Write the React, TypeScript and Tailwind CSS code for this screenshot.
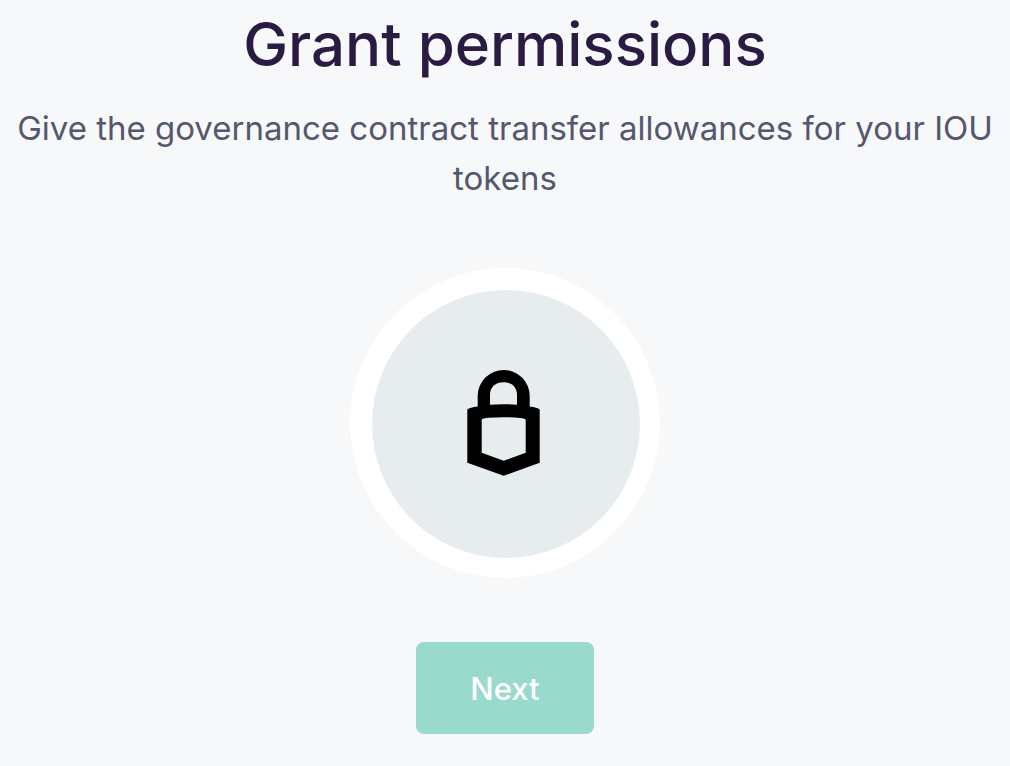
function LockMedallion() {
  return (
    <svg className="mt-[65px] size-[310px]" viewBox="0 0 310 310" role="img" aria-label="Padlock">
      <circle cx="155" cy="155" r="155" fill="#ffffff" />
      <circle cx="156" cy="156" r="134" fill="#e7edef" />
      <path
        fillRule="evenodd"
        d="M127.700 138.600V128a26 26 0 0 1 52 0v10.600q7.500 1.200 10 2.800V194.700L153.700 207.700L117.300 194.700V141.400q2.500-1.600 10.400-2.800ZM140 136.700Q153.700 135.800 167 136.700V127C167 119 161.500 114.300 153.500 114.300S140 119 140 127ZM131.700 151.400V184.700L153.700 192.700L175.700 184.700V151.400Q173 149.300 153.700 149.300T131.700 151.400Z"
      />
    </svg>
  );
}

export default function App() {
  return (
    <main className="flex min-h-screen flex-col items-center bg-[#f7f8fa] px-2 pb-8 text-center font-['Inter',sans-serif]">
      <h1 className="pt-2 text-[60px] leading-[72px] font-medium text-[#2a1b42]">Grant permissions</h1>
      <p className="mt-[23px] text-[33px] leading-[50px] text-[#55576d]">
        Give the governance contract transfer allowances for your IOU tokens
      </p>
      <LockMedallion />
      <button
        type="button"
        className="mt-16 h-[92px] w-[178px] rounded-lg bg-[#99dacc] pt-0.5 text-[31px] font-medium text-white"
      >
        Next
      </button>
    </main>
  );
}
